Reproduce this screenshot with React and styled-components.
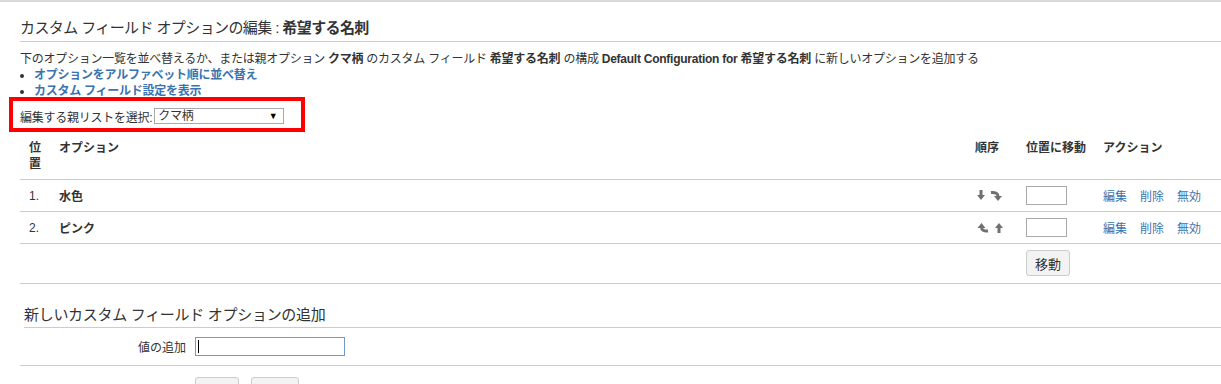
import React from 'react'
import styled, { createGlobalStyle } from 'styled-components'

const GlobalStyle = createGlobalStyle`
    body {
        margin: 0;
        background: #fff;
        color: #333;
        font-family: "Liberation Sans", Arial, "Noto Sans CJK JP", sans-serif;
        font-size: 12px;
    }
`

const Page = styled.div`
    border-top: 2px solid #d9d9d9;
    padding-left: 20px;
    height: 382px;
    overflow: hidden;
`

const Title = styled.h2`
    margin: 16px 0 0;
    font-size: 15px;
    font-weight: normal;
    letter-spacing: -0.6px;
    line-height: 20px;
    padding-bottom: 3px;
    border-bottom: 1px solid #ccc;
`

const Strong = styled.b`
    font-weight: bold;
`

const Description = styled.p`
    margin: 9px 0 0;
    line-height: 16px;
    letter-spacing: -0.25px;
`

const LinkList = styled.ul`
    margin: 0;
    padding-left: 14px;
    line-height: 16px;
    letter-spacing: -0.25px;
`

const BoldLink = styled.a`
    color: #3b73af;
    font-weight: bold;
    text-decoration: none;
`

const ParentRow = styled.div`
    position: relative;
    height: 34px;
    display: flex;
    align-items: center;
    gap: 2px;
    letter-spacing: -0.25px;
`

const Highlight = styled.div`
    position: absolute;
    left: -11px;
    top: -2px;
    width: 288px;
    height: 27px;
    border: 4px solid #ff0000;
    pointer-events: none;
`

const SelectBox = styled.div`
    position: relative;
    width: 125px;
    height: 14px;
    border: 1px solid #a9a9a9;
    padding-left: 3px;
    line-height: 14px;
    font-size: 12px;

    &::after {
        content: "▼";
        position: absolute;
        right: 6px;
        top: 0;
        font-size: 9px;
        color: #000;
    }
`

const Table = styled.table`
    width: 1201px;
    table-layout: fixed;
    border-collapse: collapse;
`

const Th = styled.th`
    text-align: left;
    font-weight: bold;
    vertical-align: top;
    line-height: 16px;
    padding: 7px 0 7px ${p => p.$pad || 7}px;
    border-bottom: 1px solid #ccc;
`

const Td = styled.td`
    height: 31px;
    padding: 0 0 0 ${p => p.$pad || 7}px;
    border-bottom: 1px solid #ccc;
    vertical-align: middle;
    font-weight: ${p => (p.$bold ? 'bold' : 'normal')};
`

const ButtonCell = styled.td`
    padding: 6px 0 7px 7px;
    border-bottom: 1px solid #ccc;
`

const Arrows = styled.div`
    display: flex;
    gap: ${p => p.$gap}px;
    padding-left: 2px;
    align-items: center;
`

const MoveInput = styled.input`
    box-sizing: border-box;
    width: 41px;
    height: 19px;
    border: 1px solid #a9a9a9;
    margin: 0;
    display: block;
`

const Actions = styled.div`
    display: flex;
    gap: 13px;
`

const ActionLink = styled.a`
    color: #3b73af;
    text-decoration: none;
`

const Button = styled.button`
    height: 26px;
    padding: 0 ${p => p.$pad || 8}px;
    background: #f3f3f3;
    border: 1px solid #ccc;
    border-radius: 3px;
    font-family: inherit;
    font-size: 13px;
    color: #333;
`

const AddTitle = styled.h3`
    margin: 21px 0 0 4px;
    font-size: 15px;
    font-weight: normal;
    letter-spacing: -0.3px;
    line-height: 20px;
    padding-bottom: 2px;
    border-bottom: 1px solid #ccc;
`

const FormRow = styled.div`
    display: grid;
    grid-template-columns: 166px 150px;
    column-gap: 9px;
    align-items: center;
    height: 37px;
    border-bottom: 1px solid #ccc;
`

const Label = styled.label`
    text-align: right;
`

const InputWrap = styled.div`
    position: relative;
    height: 19px;
`

const ValueInput = styled.input`
    box-sizing: border-box;
    width: 150px;
    height: 19px;
    margin: 0;
    border: 1px solid #6f98d8;
    outline: none;
    display: block;
`

const Caret = styled.span`
    position: absolute;
    left: 3px;
    top: 3px;
    width: 1px;
    height: 13px;
    background: #000;
`

const FormButtons = styled.div`
    display: flex;
    gap: 12px;
    margin: 11px 0 0 175px;
`

const DownArrow = () => (
  <svg width="8" height="11" viewBox="0 0 8 11">
    <rect x="2.5" y="0" width="3" height="6" fill="#707070" />
    <polygon points="0,5 8,5 4,10" fill="#707070" />
  </svg>
)

const UpArrow = () => (
  <svg width="8" height="11" viewBox="0 0 8 11">
    <rect x="2.5" y="5" width="3" height="6" fill="#707070" />
    <polygon points="0,6 8,6 4,1" fill="#707070" />
  </svg>
)

const CurvedDown = () => (
  <svg width="13" height="12" viewBox="0 0 13 12">
    <path d="M1 2.5 Q8 2 8 6.5" stroke="#707070" strokeWidth="3" fill="none" />
    <polygon points="4,6 12,6 8,11" fill="#707070" />
  </svg>
)

const CurvedUp = () => (
  <svg width="12" height="12" viewBox="0 0 12 12">
    <path d="M4.5 5 Q4.5 9.5 11 9" stroke="#707070" strokeWidth="3" fill="none" />
    <polygon points="0.5,6 8.5,6 4.5,1" fill="#707070" />
  </svg>
)

const options = [
  { pos: '1.', name: '水色', arrows: [<DownArrow key="a" />, <CurvedDown key="b" />], gap: 5 },
  { pos: '2.', name: 'ピンク', arrows: [<CurvedUp key="a" />, <UpArrow key="b" />], gap: 6 },
]

export default function App() {
  return (
    <Page>
      <GlobalStyle />
      <Title>
        カスタム フィールド オプションの編集 : <Strong>希望する名刺</Strong>
      </Title>
      <Description>
        下のオプション一覧を並べ替えるか、または親オプション <Strong>クマ柄</Strong> のカスタム フィールド{' '}
        <Strong>希望する名刺</Strong> の構成 <Strong>Default Configuration for 希望する名刺</Strong>{' '}
        に新しいオプションを追加する
      </Description>
      <LinkList>
        <li><BoldLink href="#">オプションをアルファベット順に並べ替え</BoldLink></li>
        <li><BoldLink href="#">カスタム フィールド設定を表示</BoldLink></li>
      </LinkList>
      <ParentRow>
        <Highlight />
        <span>編集する親リストを選択:</span>
        <SelectBox>クマ柄</SelectBox>
      </ParentRow>
      <Table>
        <colgroup>
          <col style={{ width: 32 }} />
          <col style={{ width: 916 }} />
          <col style={{ width: 51 }} />
          <col style={{ width: 77 }} />
          <col style={{ width: 125 }} />
        </colgroup>
        <thead>
          <tr>
            <Th $pad={9}>位<br />置</Th>
            <Th>オプション</Th>
            <Th>順序</Th>
            <Th>位置に移動</Th>
            <Th>アクション</Th>
          </tr>
        </thead>
        <tbody>
          {options.map(o => (
            <tr key={o.pos}>
              <Td $pad={9}>{o.pos}</Td>
              <Td $bold>{o.name}</Td>
              <Td><Arrows $gap={o.gap}>{o.arrows}</Arrows></Td>
              <Td><MoveInput type="text" /></Td>
              <Td>
                <Actions>
                  <ActionLink href="#">編集</ActionLink>
                  <ActionLink href="#">削除</ActionLink>
                  <ActionLink href="#">無効</ActionLink>
                </Actions>
              </Td>
            </tr>
          ))}
          <tr>
            <ButtonCell colSpan={3} />
            <ButtonCell colSpan={2}>
              <Button>移動</Button>
            </ButtonCell>
          </tr>
        </tbody>
      </Table>
      <AddTitle>新しいカスタム フィールド オプションの追加</AddTitle>
      <FormRow>
        <Label>値の追加</Label>
        <InputWrap>
          <ValueInput type="text" />
          <Caret />
        </InputWrap>
      </FormRow>
      <FormButtons>
        <Button>追加</Button>
        <Button $pad={10}>完了</Button>
      </FormButtons>
    </Page>
  )
}
